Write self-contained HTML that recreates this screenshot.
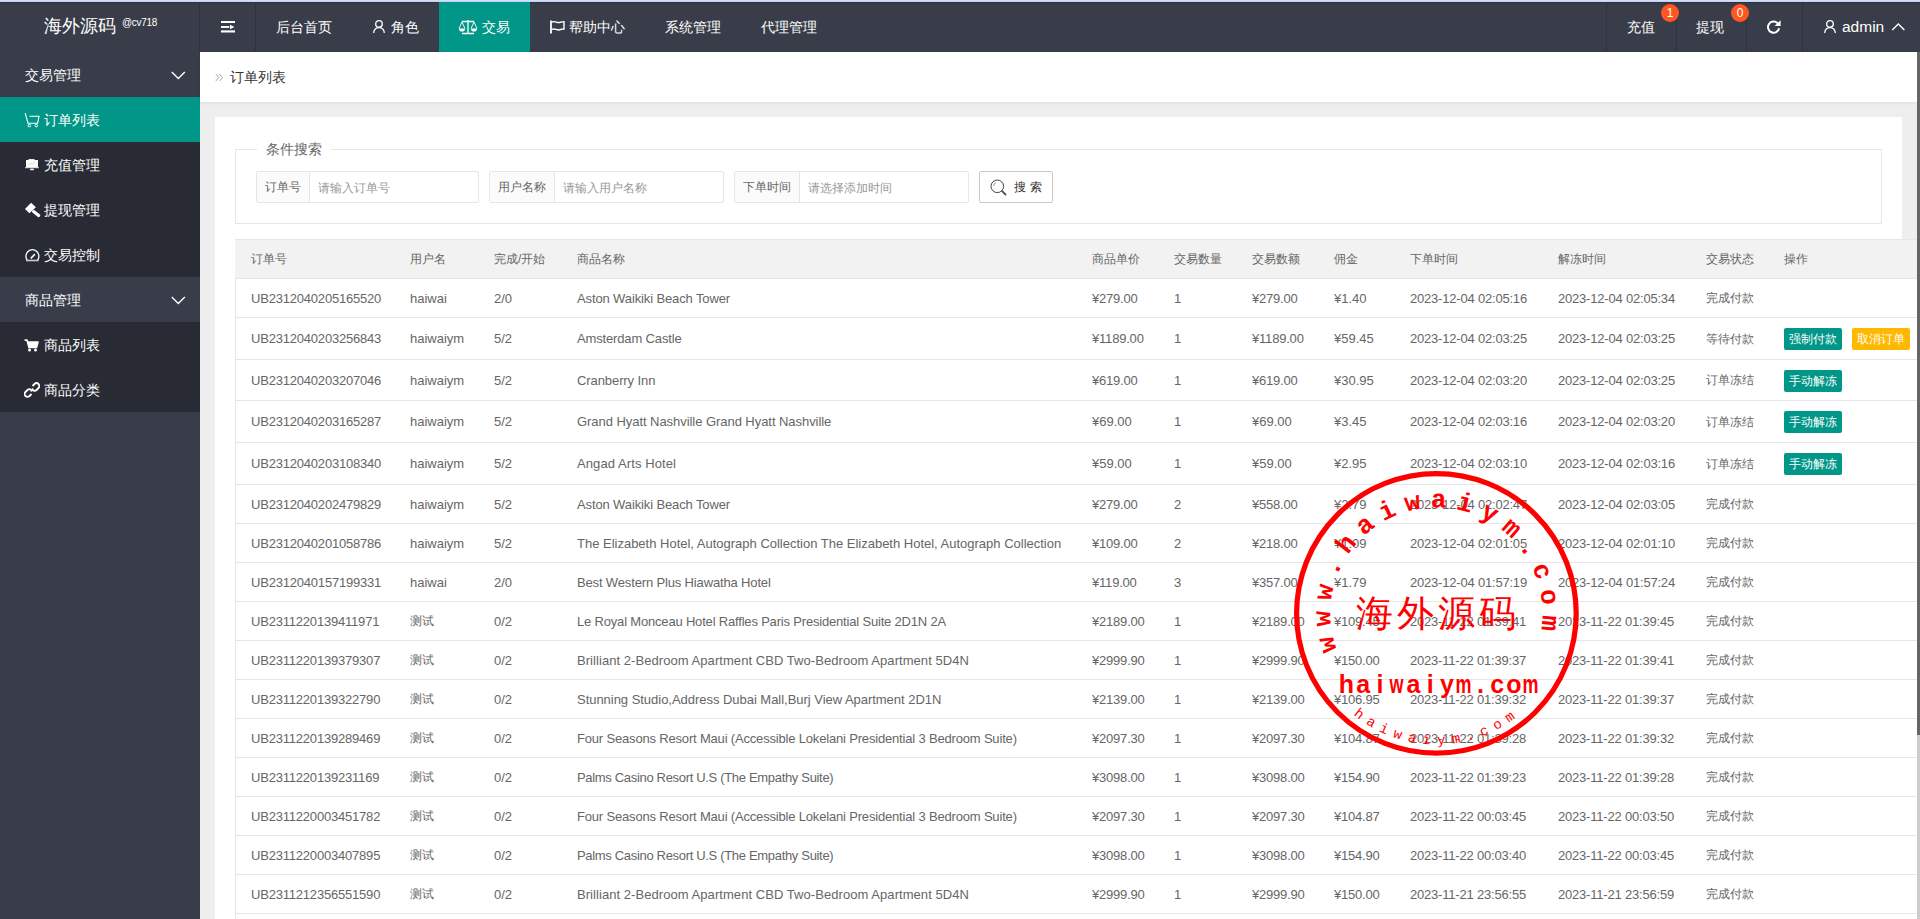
<!DOCTYPE html>
<html><head><meta charset="utf-8"><title>订单列表</title>
<style>
*{box-sizing:border-box;margin:0;padding:0}
html,body{width:1920px;height:919px;overflow:hidden;background:#eeeeee;font-family:"Liberation Sans",sans-serif;color:#666}
.abs{position:absolute}
#topline{position:absolute;left:0;top:0;width:1920px;height:2px;background:linear-gradient(#d3e2fb,#c4d0e8)}
#header{position:absolute;left:0;top:2px;width:1920px;height:50px;background:#393d49;border-top:1px solid #31333e}
.hsep{position:absolute;top:2px;width:1px;height:50px;background:#30333d}
.logo{position:absolute;left:44px;top:14px;color:#fff;font-size:18px;line-height:24px}
.logo sup{position:absolute;left:78px;top:3px;font-size:10px;line-height:12px;letter-spacing:-0.3px}
.nav{position:absolute;top:2px;height:50px;line-height:50px;font-weight:500;color:#fff;font-size:14px;white-space:nowrap}
.navact{position:absolute;left:439px;top:2px;width:91px;height:50px;background:#009688}
.badge{position:absolute;top:4px;width:18px;height:18px;border-radius:9px;background:#ff5722;color:#fff;font-size:12px;line-height:18px;text-align:center}
#side{position:absolute;left:0;top:52px;width:200px;height:867px;background:#393d49}
.sg{position:absolute;left:0;width:200px;height:45px;line-height:46px;font-weight:500;background:#393d49;color:#fff;font-size:14px;padding-left:25px}
.si{position:absolute;left:0;width:200px;height:45px;line-height:46px;font-weight:500;background:#282b33;color:#fff;font-size:14px;padding-left:44px}
.si.on{background:#009688}
.chev{position:absolute;left:172px;top:18px;width:10px;height:10px}
.sico{position:absolute;left:25px;top:16px;width:14px;height:14px}
#crumb{position:absolute;left:200px;top:52px;width:1717px;height:50px;background:#fff;box-shadow:0 1px 3px rgba(0,0,0,.08)}
#card{position:absolute;left:215px;top:117px;width:1687px;height:802px;background:#fff}
#fs{position:absolute;left:235px;top:149px;width:1647px;height:75px;border:1px solid #e6e6e6}
.legend{position:absolute;left:257px;top:140px;padding:0 9px;background:#fff;font-size:14px;line-height:18px;color:#666}
.ig{position:absolute;top:171px;height:32px;border:1px solid #e6e6e6;border-radius:2px;background:#fff}
.ig .lb{position:absolute;left:0;top:0;height:30px;line-height:30px;background:#fbfbfb;border-right:1px solid #e6e6e6;font-size:12px;color:#666;text-align:center}
.ig .ph{position:absolute;top:0;height:30px;line-height:32px;font-size:12px;color:#999}
.sbtn{position:absolute;left:979px;top:171px;width:74px;height:32px;border:1px solid #c9c9c9;border-radius:2px;background:#fff;font-size:12px;color:#333}
.thead{position:absolute;left:235px;width:1682px;background:#f2f2f2;border-top:1px solid #e6e6e6;border-bottom:1px solid #e6e6e6}
.tbody{position:absolute;left:235px;top:278px;width:1682px;height:641px;background:#fff;border-left:1px solid #e6e6e6}
.rowline{position:absolute;left:235px;width:1682px;height:1px;background:#e6e6e6}
.cell{position:absolute;white-space:nowrap;font-size:12px;color:#666}
.cell .en{font-size:13px}
.th{color:#666}
.btn{position:absolute;width:58px;height:22px;line-height:22px;border-radius:2px;color:#fff;font-size:12px;font-weight:500;text-align:center}
.btn.g{background:#009688}
.btn.w{background:#ffb800}
#sb{position:absolute;left:1917px;top:52px;width:3px;height:867px;background:#cdcdcd}
#sbt{position:absolute;left:1917px;top:52px;width:3px;height:683px;background:#666}
</style></head><body>
<div id="topline"></div>
<div id="header"></div>
<div class="hsep" style="left:199px"></div>
<div class="hsep" style="left:255px"></div>
<div class="hsep" style="left:1606px"></div>
<div class="hsep" style="left:1676px"></div>
<div class="hsep" style="left:1746px"></div>
<div class="hsep" style="left:1802px"></div>
<div class="logo">海外源码<sup>@cv718</sup></div>
<svg class="abs" style="left:221px;top:21px" width="16" height="13" viewBox="0 0 16 13"><rect x="0" y="0" width="14" height="2" fill="#fff"/><rect x="0" y="5" width="8.3" height="1.9" fill="#fff"/><path d="M9 3.7 L13.4 6 L9 8.2Z" fill="#fff"/><rect x="0" y="9.4" width="14" height="2.1" fill="#fff"/></svg>
<div class="navact"></div>
<div class="nav" style="left:276px">后台首页</div>
<div class="nav" style="left:391px">角色</div>
<div class="nav" style="left:482px">交易</div>
<div class="nav" style="left:569px">帮助中心</div>
<div class="nav" style="left:665px">系统管理</div>
<div class="nav" style="left:761px">代理管理</div>
<div class="nav" style="left:1627px">充值</div>
<div class="nav" style="left:1696px">提现</div>
<div class="badge" style="left:1661px">1</div>
<div class="badge" style="left:1731px">0</div>
<div class="nav" style="left:1842px;font-size:15.5px">admin</div>

<div id="side"></div>
<div class="sg" style="top:52px">交易管理</div>
<div class="si on" style="top:97px">订单列表</div>
<div class="si" style="top:142px">充值管理</div>
<div class="si" style="top:187px">提现管理</div>
<div class="si" style="top:232px">交易控制</div>
<div class="sg" style="top:277px">商品管理</div>
<div class="si" style="top:322px">商品列表</div>
<div class="si" style="top:367px">商品分类</div>


<svg class="abs" style="left:372px;top:19px" width="14" height="15" viewBox="0 0 14 15"><circle cx="7" cy="4.9" r="3.3" fill="none" stroke="#fff" stroke-width="1.3"/><path d="M1.7 14 C1.7 10.5 4 8.7 7 8.7 C10 8.7 12.3 10.5 12.3 14" fill="none" stroke="#fff" stroke-width="1.3"/></svg>
<svg class="abs" style="left:458px;top:19px" width="20" height="16" viewBox="0 0 20 16"><path d="M4 2.5 H16 M10 1 V14.5 M4 14.5 H16" stroke="#fff" stroke-width="1.3" fill="none"/><path d="M4 3 L1 9.5 M4 3 L7 9.5 M16 3 L13 9.5 M16 3 L19 9.5" stroke="#fff" stroke-width="0.9" fill="none"/><path d="M1 9.5 H7 C7 12 5.6 12.6 4 12.6 C2.4 12.6 1 12 1 9.5Z M13 9.5 H19 C19 12 17.6 12.6 16 12.6 C14.4 12.6 13 12 13 9.5Z" fill="#fff"/></svg>
<svg class="abs" style="left:549px;top:20px" width="17" height="14" viewBox="0 0 17 14"><path d="M2 0.5 V13.5" stroke="#fff" stroke-width="1.8"/><path d="M3 2 C6 0.5 8 3.5 10.5 2.5 C12 2 13 2 15 1.8 V9 C13 9.2 12 9.4 10.5 9.8 C8 10.8 6 7.8 3 9.3" fill="none" stroke="#fff" stroke-width="1.4"/></svg>
<svg class="abs" style="left:1766px;top:19px" width="16" height="15" viewBox="0 0 16 15"><path d="M11.6 4.2 A5.6 5.6 0 1 0 13.1 9.2" fill="none" stroke="#fff" stroke-width="2"/><path d="M8.6 6.9 L14.6 1.2 L14.6 6.9Z" fill="#fff"/></svg>
<svg class="abs" style="left:1823px;top:19px" width="14" height="15" viewBox="0 0 14 15"><circle cx="7" cy="4.9" r="3.3" fill="none" stroke="#fff" stroke-width="1.3"/><path d="M1.7 14 C1.7 10.5 4 8.7 7 8.7 C10 8.7 12.3 10.5 12.3 14" fill="none" stroke="#fff" stroke-width="1.3"/></svg>
<svg class="abs" style="left:1891px;top:22px" width="15" height="10" viewBox="0 0 15 10"><path d="M1.2 8 L7.3 2 L13.4 8" fill="none" stroke="#fff" stroke-width="1.4"/></svg>
<svg class="abs" style="left:171px;top:71px" width="15" height="9" viewBox="0 0 15 9"><path d="M0.8 1 L7.3 7.5 L13.8 1" fill="none" stroke="#fff" stroke-width="1.4"/></svg>
<svg class="abs" style="left:171px;top:296px" width="15" height="9" viewBox="0 0 15 9"><path d="M0.8 1 L7.3 7.5 L13.8 1" fill="none" stroke="#fff" stroke-width="1.4"/></svg>
<svg class="abs" style="left:24px;top:112px" width="16" height="16" viewBox="0 0 16 16"><path d="M1.2 1.2 L4 11.2 H13.6 L15 4.2 H5.5" fill="none" stroke="#fff" stroke-width="1.1"/><circle cx="5.3" cy="13.6" r="1.3" fill="none" stroke="#fff" stroke-width="1"/><circle cx="12.3" cy="13.6" r="1.3" fill="none" stroke="#fff" stroke-width="1"/></svg>
<svg class="abs" style="left:24px;top:158px" width="16" height="13" viewBox="0 0 16 13"><rect x="4.5" y="1" width="6" height="1.6" fill="#e8e8f0"/><rect x="2" y="2" width="12" height="7.8" fill="#fff"/><rect x="1" y="9.2" width="14" height="1" fill="#ddd"/><rect x="7.3" y="10.2" width="1.4" height="1" fill="#ccc"/><rect x="6" y="11" width="4" height="1.2" fill="#eee"/><path d="M4.5 6.5 L6.5 5.5 L8.5 5.8 L11 4" stroke="#e0c8c8" stroke-width="0.8" fill="none"/></svg>
<svg class="abs" style="left:24px;top:202px" width="17" height="16" viewBox="0 0 17 16"><path d="M7.1 0.8 L11.9 5.2 L5.4 11.3 L1 7.1Z" fill="#fff"/><path d="M9.6 9.6 L14.6 13.6" stroke="#fff" stroke-width="3.2" stroke-linecap="round"/></svg>
<svg class="abs" style="left:24px;top:248px" width="16" height="14" viewBox="0 0 16 14"><path d="M3.36 12.3 A6.5 6.5 0 1 1 13.44 12.3" fill="none" stroke="#fff" stroke-width="1.3"/><path d="M6.8 10.4 L10.9 6.1" stroke="#fff" stroke-width="1.6"/><rect x="2" y="11.7" width="12.6" height="1.6" fill="#c8c8c8"/></svg>
<svg class="abs" style="left:24px;top:339px" width="15" height="13" viewBox="0 0 15 13"><path d="M0.5 1 H3 L5 8.5 H12.5 L14 3 H4" fill="#fff" stroke="#fff" stroke-width="1.6" stroke-linejoin="round"/><circle cx="5.5" cy="11" r="1.5" fill="#fff"/><circle cx="11.5" cy="11" r="1.5" fill="#fff"/></svg>
<svg class="abs" style="left:24px;top:382px" width="16" height="16" viewBox="0 0 16 16"><path d="M6.6 9.4 L9.4 6.6" stroke="#fff" stroke-width="1.6"/><path d="M8.5 4 L10.5 2 C11.6 0.9 13.4 0.9 14.5 2 C15.6 3.1 15.6 4.9 14.5 6 L12.5 8 C11.4 9.1 9.6 9.1 8.5 8" fill="none" stroke="#fff" stroke-width="1.8"/><path d="M7.5 12 L5.5 14 C4.4 15.1 2.6 15.1 1.5 14 C0.4 12.9 0.4 11.1 1.5 10 L3.5 8 C4.6 6.9 6.4 6.9 7.5 8" fill="none" stroke="#fff" stroke-width="1.8"/></svg>
<div id="crumb"><span class="abs" style="left:30px;top:16px;font-size:14px;line-height:18px;color:#333">订单列表</span></div>
<svg class="abs" style="left:214px;top:72px" width="10" height="11" viewBox="0 0 10 11"><path d="M1.8 2 L4.8 5.5 L1.8 9 M5.5 2 L8.5 5.5 L5.5 9" fill="none" stroke="#aaa" stroke-width="1"/></svg>
<div id="card"></div>
<div id="fs"></div>
<div class="legend">条件搜索</div>
<div class="ig" style="left:256px;width:223px"><div class="lb" style="width:53px">订单号</div><div class="ph" style="left:61px">请输入订单号</div></div>
<div class="ig" style="left:489px;width:235px"><div class="lb" style="width:65px">用户名称</div><div class="ph" style="left:73px">请输入用户名称</div></div>
<div class="ig" style="left:734px;width:235px"><div class="lb" style="width:65px">下单时间</div><div class="ph" style="left:73px">请选择添加时间</div></div>
<div class="sbtn"><span class="abs" style="left:34px;top:7px;font-size:12px;line-height:16px;letter-spacing:4px">搜索</span></div>

<svg class="abs" style="left:989px;top:178px" width="19" height="18" viewBox="0 0 19 18"><circle cx="8.3" cy="8.3" r="6.3" fill="none" stroke="#444" stroke-width="1"/><path d="M13.2 13.2 L16.6 16.6" stroke="#444" stroke-width="1.7" stroke-linecap="round"/><path d="M4.8 8 C4.8 6.5 5.4 5.4 6.6 4.9" fill="none" stroke="#666" stroke-width="0.7"/></svg>
<div class="tbody"></div>
<div class="thead" style="top:239px;height:40px"></div>
<div class="cell th" style="left:251px;top:240px;height:38px;line-height:38px">订单号</div>
<div class="cell th" style="left:410px;top:240px;height:38px;line-height:38px">用户名</div>
<div class="cell th" style="left:494px;top:240px;height:38px;line-height:38px">完成/开始</div>
<div class="cell th" style="left:577px;top:240px;height:38px;line-height:38px">商品名称</div>
<div class="cell th" style="left:1092px;top:240px;height:38px;line-height:38px">商品单价</div>
<div class="cell th" style="left:1174px;top:240px;height:38px;line-height:38px">交易数量</div>
<div class="cell th" style="left:1252px;top:240px;height:38px;line-height:38px">交易数额</div>
<div class="cell th" style="left:1334px;top:240px;height:38px;line-height:38px">佣金</div>
<div class="cell th" style="left:1410px;top:240px;height:38px;line-height:38px">下单时间</div>
<div class="cell th" style="left:1558px;top:240px;height:38px;line-height:38px">解冻时间</div>
<div class="cell th" style="left:1706px;top:240px;height:38px;line-height:38px">交易状态</div>
<div class="cell th" style="left:1784px;top:240px;height:38px;line-height:38px">操作</div>
<div class="rowline" style="top:317px"></div>
<div class="cell" style="left:251px;top:279px;height:39px;line-height:39px;letter-spacing:-0.2px;"><span class="en">UB2312040205165520</span></div>
<div class="cell" style="left:410px;top:279px;height:39px;line-height:39px;"><span class="en">haiwai</span></div>
<div class="cell" style="left:494px;top:279px;height:39px;line-height:39px;"><span class="en">2/0</span></div>
<div class="cell" style="left:577px;top:279px;height:39px;line-height:39px;letter-spacing:-0.124px;"><span class="en">Aston Waikiki Beach Tower</span></div>
<div class="cell" style="left:1092px;top:279px;height:39px;line-height:39px;letter-spacing:-0.2px;"><span class="en">¥279.00</span></div>
<div class="cell" style="left:1174px;top:279px;height:39px;line-height:39px;"><span class="en">1</span></div>
<div class="cell" style="left:1252px;top:279px;height:39px;line-height:39px;letter-spacing:-0.2px;"><span class="en">¥279.00</span></div>
<div class="cell" style="left:1334px;top:279px;height:39px;line-height:39px;"><span class="en">¥1.40</span></div>
<div class="cell" style="left:1410px;top:279px;height:39px;line-height:39px;letter-spacing:-0.2px;"><span class="en">2023-12-04 02:05:16</span></div>
<div class="cell" style="left:1558px;top:279px;height:39px;line-height:39px;letter-spacing:-0.2px;"><span class="en">2023-12-04 02:05:34</span></div>
<div class="cell" style="left:1706px;top:279px;height:39px;line-height:39px;"><span class="zh">完成付款</span></div>
<div class="rowline" style="top:359px"></div>
<div class="cell" style="left:251px;top:318px;height:42px;line-height:42px;letter-spacing:-0.2px;"><span class="en">UB2312040203256843</span></div>
<div class="cell" style="left:410px;top:318px;height:42px;line-height:42px;"><span class="en">haiwaiym</span></div>
<div class="cell" style="left:494px;top:318px;height:42px;line-height:42px;"><span class="en">5/2</span></div>
<div class="cell" style="left:577px;top:318px;height:42px;line-height:42px;letter-spacing:-0.150px;"><span class="en">Amsterdam Castle</span></div>
<div class="cell" style="left:1092px;top:318px;height:42px;line-height:42px;letter-spacing:-0.2px;"><span class="en">¥1189.00</span></div>
<div class="cell" style="left:1174px;top:318px;height:42px;line-height:42px;"><span class="en">1</span></div>
<div class="cell" style="left:1252px;top:318px;height:42px;line-height:42px;letter-spacing:-0.2px;"><span class="en">¥1189.00</span></div>
<div class="cell" style="left:1334px;top:318px;height:42px;line-height:42px;"><span class="en">¥59.45</span></div>
<div class="cell" style="left:1410px;top:318px;height:42px;line-height:42px;letter-spacing:-0.2px;"><span class="en">2023-12-04 02:03:25</span></div>
<div class="cell" style="left:1558px;top:318px;height:42px;line-height:42px;letter-spacing:-0.2px;"><span class="en">2023-12-04 02:03:25</span></div>
<div class="cell" style="left:1706px;top:318px;height:42px;line-height:42px;"><span class="zh">等待付款</span></div>
<div class="btn g" style="left:1784px;top:328px">强制付款</div>
<div class="btn w" style="left:1852px;top:328px">取消订单</div>
<div class="rowline" style="top:400px"></div>
<div class="cell" style="left:251px;top:360px;height:41px;line-height:41px;letter-spacing:-0.2px;"><span class="en">UB2312040203207046</span></div>
<div class="cell" style="left:410px;top:360px;height:41px;line-height:41px;"><span class="en">haiwaiym</span></div>
<div class="cell" style="left:494px;top:360px;height:41px;line-height:41px;"><span class="en">5/2</span></div>
<div class="cell" style="left:577px;top:360px;height:41px;line-height:41px;letter-spacing:-0.085px;"><span class="en">Cranberry Inn</span></div>
<div class="cell" style="left:1092px;top:360px;height:41px;line-height:41px;letter-spacing:-0.2px;"><span class="en">¥619.00</span></div>
<div class="cell" style="left:1174px;top:360px;height:41px;line-height:41px;"><span class="en">1</span></div>
<div class="cell" style="left:1252px;top:360px;height:41px;line-height:41px;letter-spacing:-0.2px;"><span class="en">¥619.00</span></div>
<div class="cell" style="left:1334px;top:360px;height:41px;line-height:41px;"><span class="en">¥30.95</span></div>
<div class="cell" style="left:1410px;top:360px;height:41px;line-height:41px;letter-spacing:-0.2px;"><span class="en">2023-12-04 02:03:20</span></div>
<div class="cell" style="left:1558px;top:360px;height:41px;line-height:41px;letter-spacing:-0.2px;"><span class="en">2023-12-04 02:03:25</span></div>
<div class="cell" style="left:1706px;top:360px;height:41px;line-height:41px;"><span class="zh">订单冻结</span></div>
<div class="btn g" style="left:1784px;top:370px">手动解冻</div>
<div class="rowline" style="top:442px"></div>
<div class="cell" style="left:251px;top:401px;height:42px;line-height:42px;letter-spacing:-0.2px;"><span class="en">UB2312040203165287</span></div>
<div class="cell" style="left:410px;top:401px;height:42px;line-height:42px;"><span class="en">haiwaiym</span></div>
<div class="cell" style="left:494px;top:401px;height:42px;line-height:42px;"><span class="en">5/2</span></div>
<div class="cell" style="left:577px;top:401px;height:42px;line-height:42px;letter-spacing:-0.051px;"><span class="en">Grand Hyatt Nashville Grand Hyatt Nashville</span></div>
<div class="cell" style="left:1092px;top:401px;height:42px;line-height:42px;"><span class="en">¥69.00</span></div>
<div class="cell" style="left:1174px;top:401px;height:42px;line-height:42px;"><span class="en">1</span></div>
<div class="cell" style="left:1252px;top:401px;height:42px;line-height:42px;"><span class="en">¥69.00</span></div>
<div class="cell" style="left:1334px;top:401px;height:42px;line-height:42px;"><span class="en">¥3.45</span></div>
<div class="cell" style="left:1410px;top:401px;height:42px;line-height:42px;letter-spacing:-0.2px;"><span class="en">2023-12-04 02:03:16</span></div>
<div class="cell" style="left:1558px;top:401px;height:42px;line-height:42px;letter-spacing:-0.2px;"><span class="en">2023-12-04 02:03:20</span></div>
<div class="cell" style="left:1706px;top:401px;height:42px;line-height:42px;"><span class="zh">订单冻结</span></div>
<div class="btn g" style="left:1784px;top:411px">手动解冻</div>
<div class="rowline" style="top:484px"></div>
<div class="cell" style="left:251px;top:443px;height:42px;line-height:42px;letter-spacing:-0.2px;"><span class="en">UB2312040203108340</span></div>
<div class="cell" style="left:410px;top:443px;height:42px;line-height:42px;"><span class="en">haiwaiym</span></div>
<div class="cell" style="left:494px;top:443px;height:42px;line-height:42px;"><span class="en">5/2</span></div>
<div class="cell" style="left:577px;top:443px;height:42px;line-height:42px;letter-spacing:0.094px;"><span class="en">Angad Arts Hotel</span></div>
<div class="cell" style="left:1092px;top:443px;height:42px;line-height:42px;"><span class="en">¥59.00</span></div>
<div class="cell" style="left:1174px;top:443px;height:42px;line-height:42px;"><span class="en">1</span></div>
<div class="cell" style="left:1252px;top:443px;height:42px;line-height:42px;"><span class="en">¥59.00</span></div>
<div class="cell" style="left:1334px;top:443px;height:42px;line-height:42px;"><span class="en">¥2.95</span></div>
<div class="cell" style="left:1410px;top:443px;height:42px;line-height:42px;letter-spacing:-0.2px;"><span class="en">2023-12-04 02:03:10</span></div>
<div class="cell" style="left:1558px;top:443px;height:42px;line-height:42px;letter-spacing:-0.2px;"><span class="en">2023-12-04 02:03:16</span></div>
<div class="cell" style="left:1706px;top:443px;height:42px;line-height:42px;"><span class="zh">订单冻结</span></div>
<div class="btn g" style="left:1784px;top:453px">手动解冻</div>
<div class="rowline" style="top:523px"></div>
<div class="cell" style="left:251px;top:485px;height:39px;line-height:39px;letter-spacing:-0.2px;"><span class="en">UB2312040202479829</span></div>
<div class="cell" style="left:410px;top:485px;height:39px;line-height:39px;"><span class="en">haiwaiym</span></div>
<div class="cell" style="left:494px;top:485px;height:39px;line-height:39px;"><span class="en">5/2</span></div>
<div class="cell" style="left:577px;top:485px;height:39px;line-height:39px;letter-spacing:-0.124px;"><span class="en">Aston Waikiki Beach Tower</span></div>
<div class="cell" style="left:1092px;top:485px;height:39px;line-height:39px;letter-spacing:-0.2px;"><span class="en">¥279.00</span></div>
<div class="cell" style="left:1174px;top:485px;height:39px;line-height:39px;"><span class="en">2</span></div>
<div class="cell" style="left:1252px;top:485px;height:39px;line-height:39px;letter-spacing:-0.2px;"><span class="en">¥558.00</span></div>
<div class="cell" style="left:1334px;top:485px;height:39px;line-height:39px;"><span class="en">¥2.79</span></div>
<div class="cell" style="left:1410px;top:485px;height:39px;line-height:39px;letter-spacing:-0.2px;"><span class="en">2023-12-04 02:02:47</span></div>
<div class="cell" style="left:1558px;top:485px;height:39px;line-height:39px;letter-spacing:-0.2px;"><span class="en">2023-12-04 02:03:05</span></div>
<div class="cell" style="left:1706px;top:485px;height:39px;line-height:39px;"><span class="zh">完成付款</span></div>
<div class="rowline" style="top:562px"></div>
<div class="cell" style="left:251px;top:524px;height:39px;line-height:39px;letter-spacing:-0.2px;"><span class="en">UB2312040201058786</span></div>
<div class="cell" style="left:410px;top:524px;height:39px;line-height:39px;"><span class="en">haiwaiym</span></div>
<div class="cell" style="left:494px;top:524px;height:39px;line-height:39px;"><span class="en">5/2</span></div>
<div class="cell" style="left:577px;top:524px;height:39px;line-height:39px;letter-spacing:-0.006px;"><span class="en">The Elizabeth Hotel, Autograph Collection The Elizabeth Hotel, Autograph Collection</span></div>
<div class="cell" style="left:1092px;top:524px;height:39px;line-height:39px;letter-spacing:-0.2px;"><span class="en">¥109.00</span></div>
<div class="cell" style="left:1174px;top:524px;height:39px;line-height:39px;"><span class="en">2</span></div>
<div class="cell" style="left:1252px;top:524px;height:39px;line-height:39px;letter-spacing:-0.2px;"><span class="en">¥218.00</span></div>
<div class="cell" style="left:1334px;top:524px;height:39px;line-height:39px;"><span class="en">¥1.09</span></div>
<div class="cell" style="left:1410px;top:524px;height:39px;line-height:39px;letter-spacing:-0.2px;"><span class="en">2023-12-04 02:01:05</span></div>
<div class="cell" style="left:1558px;top:524px;height:39px;line-height:39px;letter-spacing:-0.2px;"><span class="en">2023-12-04 02:01:10</span></div>
<div class="cell" style="left:1706px;top:524px;height:39px;line-height:39px;"><span class="zh">完成付款</span></div>
<div class="rowline" style="top:601px"></div>
<div class="cell" style="left:251px;top:563px;height:39px;line-height:39px;letter-spacing:-0.2px;"><span class="en">UB2312040157199331</span></div>
<div class="cell" style="left:410px;top:563px;height:39px;line-height:39px;"><span class="en">haiwai</span></div>
<div class="cell" style="left:494px;top:563px;height:39px;line-height:39px;"><span class="en">2/0</span></div>
<div class="cell" style="left:577px;top:563px;height:39px;line-height:39px;letter-spacing:-0.150px;"><span class="en">Best Western Plus Hiawatha Hotel</span></div>
<div class="cell" style="left:1092px;top:563px;height:39px;line-height:39px;letter-spacing:-0.2px;"><span class="en">¥119.00</span></div>
<div class="cell" style="left:1174px;top:563px;height:39px;line-height:39px;"><span class="en">3</span></div>
<div class="cell" style="left:1252px;top:563px;height:39px;line-height:39px;letter-spacing:-0.2px;"><span class="en">¥357.00</span></div>
<div class="cell" style="left:1334px;top:563px;height:39px;line-height:39px;"><span class="en">¥1.79</span></div>
<div class="cell" style="left:1410px;top:563px;height:39px;line-height:39px;letter-spacing:-0.2px;"><span class="en">2023-12-04 01:57:19</span></div>
<div class="cell" style="left:1558px;top:563px;height:39px;line-height:39px;letter-spacing:-0.2px;"><span class="en">2023-12-04 01:57:24</span></div>
<div class="cell" style="left:1706px;top:563px;height:39px;line-height:39px;"><span class="zh">完成付款</span></div>
<div class="rowline" style="top:640px"></div>
<div class="cell" style="left:251px;top:602px;height:39px;line-height:39px;letter-spacing:-0.2px;"><span class="en">UB2311220139411971</span></div>
<div class="cell" style="left:410px;top:602px;height:39px;line-height:39px;"><span class="zh">测试</span></div>
<div class="cell" style="left:494px;top:602px;height:39px;line-height:39px;"><span class="en">0/2</span></div>
<div class="cell" style="left:577px;top:602px;height:39px;line-height:39px;letter-spacing:-0.183px;"><span class="en">Le Royal Monceau Hotel Raffles Paris Presidential Suite 2D1N 2A</span></div>
<div class="cell" style="left:1092px;top:602px;height:39px;line-height:39px;letter-spacing:-0.2px;"><span class="en">¥2189.00</span></div>
<div class="cell" style="left:1174px;top:602px;height:39px;line-height:39px;"><span class="en">1</span></div>
<div class="cell" style="left:1252px;top:602px;height:39px;line-height:39px;letter-spacing:-0.2px;"><span class="en">¥2189.00</span></div>
<div class="cell" style="left:1334px;top:602px;height:39px;line-height:39px;letter-spacing:-0.2px;"><span class="en">¥109.45</span></div>
<div class="cell" style="left:1410px;top:602px;height:39px;line-height:39px;letter-spacing:-0.2px;"><span class="en">2023-11-22 01:39:41</span></div>
<div class="cell" style="left:1558px;top:602px;height:39px;line-height:39px;letter-spacing:-0.2px;"><span class="en">2023-11-22 01:39:45</span></div>
<div class="cell" style="left:1706px;top:602px;height:39px;line-height:39px;"><span class="zh">完成付款</span></div>
<div class="rowline" style="top:679px"></div>
<div class="cell" style="left:251px;top:641px;height:39px;line-height:39px;letter-spacing:-0.2px;"><span class="en">UB2311220139379307</span></div>
<div class="cell" style="left:410px;top:641px;height:39px;line-height:39px;"><span class="zh">测试</span></div>
<div class="cell" style="left:494px;top:641px;height:39px;line-height:39px;"><span class="en">0/2</span></div>
<div class="cell" style="left:577px;top:641px;height:39px;line-height:39px;letter-spacing:0.058px;"><span class="en">Brilliant 2-Bedroom Apartment CBD Two-Bedroom Apartment 5D4N</span></div>
<div class="cell" style="left:1092px;top:641px;height:39px;line-height:39px;letter-spacing:-0.2px;"><span class="en">¥2999.90</span></div>
<div class="cell" style="left:1174px;top:641px;height:39px;line-height:39px;"><span class="en">1</span></div>
<div class="cell" style="left:1252px;top:641px;height:39px;line-height:39px;letter-spacing:-0.2px;"><span class="en">¥2999.90</span></div>
<div class="cell" style="left:1334px;top:641px;height:39px;line-height:39px;letter-spacing:-0.2px;"><span class="en">¥150.00</span></div>
<div class="cell" style="left:1410px;top:641px;height:39px;line-height:39px;letter-spacing:-0.2px;"><span class="en">2023-11-22 01:39:37</span></div>
<div class="cell" style="left:1558px;top:641px;height:39px;line-height:39px;letter-spacing:-0.2px;"><span class="en">2023-11-22 01:39:41</span></div>
<div class="cell" style="left:1706px;top:641px;height:39px;line-height:39px;"><span class="zh">完成付款</span></div>
<div class="rowline" style="top:718px"></div>
<div class="cell" style="left:251px;top:680px;height:39px;line-height:39px;letter-spacing:-0.2px;"><span class="en">UB2311220139322790</span></div>
<div class="cell" style="left:410px;top:680px;height:39px;line-height:39px;"><span class="zh">测试</span></div>
<div class="cell" style="left:494px;top:680px;height:39px;line-height:39px;"><span class="en">0/2</span></div>
<div class="cell" style="left:577px;top:680px;height:39px;line-height:39px;letter-spacing:-0.031px;"><span class="en">Stunning Studio,Address Dubai Mall,Burj View Apartment 2D1N</span></div>
<div class="cell" style="left:1092px;top:680px;height:39px;line-height:39px;letter-spacing:-0.2px;"><span class="en">¥2139.00</span></div>
<div class="cell" style="left:1174px;top:680px;height:39px;line-height:39px;"><span class="en">1</span></div>
<div class="cell" style="left:1252px;top:680px;height:39px;line-height:39px;letter-spacing:-0.2px;"><span class="en">¥2139.00</span></div>
<div class="cell" style="left:1334px;top:680px;height:39px;line-height:39px;letter-spacing:-0.2px;"><span class="en">¥106.95</span></div>
<div class="cell" style="left:1410px;top:680px;height:39px;line-height:39px;letter-spacing:-0.2px;"><span class="en">2023-11-22 01:39:32</span></div>
<div class="cell" style="left:1558px;top:680px;height:39px;line-height:39px;letter-spacing:-0.2px;"><span class="en">2023-11-22 01:39:37</span></div>
<div class="cell" style="left:1706px;top:680px;height:39px;line-height:39px;"><span class="zh">完成付款</span></div>
<div class="rowline" style="top:757px"></div>
<div class="cell" style="left:251px;top:719px;height:39px;line-height:39px;letter-spacing:-0.2px;"><span class="en">UB2311220139289469</span></div>
<div class="cell" style="left:410px;top:719px;height:39px;line-height:39px;"><span class="zh">测试</span></div>
<div class="cell" style="left:494px;top:719px;height:39px;line-height:39px;"><span class="en">0/2</span></div>
<div class="cell" style="left:577px;top:719px;height:39px;line-height:39px;letter-spacing:-0.177px;"><span class="en">Four Seasons Resort Maui (Accessible Lokelani Presidential 3 Bedroom Suite)</span></div>
<div class="cell" style="left:1092px;top:719px;height:39px;line-height:39px;letter-spacing:-0.2px;"><span class="en">¥2097.30</span></div>
<div class="cell" style="left:1174px;top:719px;height:39px;line-height:39px;"><span class="en">1</span></div>
<div class="cell" style="left:1252px;top:719px;height:39px;line-height:39px;letter-spacing:-0.2px;"><span class="en">¥2097.30</span></div>
<div class="cell" style="left:1334px;top:719px;height:39px;line-height:39px;letter-spacing:-0.2px;"><span class="en">¥104.87</span></div>
<div class="cell" style="left:1410px;top:719px;height:39px;line-height:39px;letter-spacing:-0.2px;"><span class="en">2023-11-22 01:39:28</span></div>
<div class="cell" style="left:1558px;top:719px;height:39px;line-height:39px;letter-spacing:-0.2px;"><span class="en">2023-11-22 01:39:32</span></div>
<div class="cell" style="left:1706px;top:719px;height:39px;line-height:39px;"><span class="zh">完成付款</span></div>
<div class="rowline" style="top:796px"></div>
<div class="cell" style="left:251px;top:758px;height:39px;line-height:39px;letter-spacing:-0.2px;"><span class="en">UB2311220139231169</span></div>
<div class="cell" style="left:410px;top:758px;height:39px;line-height:39px;"><span class="zh">测试</span></div>
<div class="cell" style="left:494px;top:758px;height:39px;line-height:39px;"><span class="en">0/2</span></div>
<div class="cell" style="left:577px;top:758px;height:39px;line-height:39px;letter-spacing:-0.323px;"><span class="en">Palms Casino Resort U.S (The Empathy Suite)</span></div>
<div class="cell" style="left:1092px;top:758px;height:39px;line-height:39px;letter-spacing:-0.2px;"><span class="en">¥3098.00</span></div>
<div class="cell" style="left:1174px;top:758px;height:39px;line-height:39px;"><span class="en">1</span></div>
<div class="cell" style="left:1252px;top:758px;height:39px;line-height:39px;letter-spacing:-0.2px;"><span class="en">¥3098.00</span></div>
<div class="cell" style="left:1334px;top:758px;height:39px;line-height:39px;letter-spacing:-0.2px;"><span class="en">¥154.90</span></div>
<div class="cell" style="left:1410px;top:758px;height:39px;line-height:39px;letter-spacing:-0.2px;"><span class="en">2023-11-22 01:39:23</span></div>
<div class="cell" style="left:1558px;top:758px;height:39px;line-height:39px;letter-spacing:-0.2px;"><span class="en">2023-11-22 01:39:28</span></div>
<div class="cell" style="left:1706px;top:758px;height:39px;line-height:39px;"><span class="zh">完成付款</span></div>
<div class="rowline" style="top:835px"></div>
<div class="cell" style="left:251px;top:797px;height:39px;line-height:39px;letter-spacing:-0.2px;"><span class="en">UB2311220003451782</span></div>
<div class="cell" style="left:410px;top:797px;height:39px;line-height:39px;"><span class="zh">测试</span></div>
<div class="cell" style="left:494px;top:797px;height:39px;line-height:39px;"><span class="en">0/2</span></div>
<div class="cell" style="left:577px;top:797px;height:39px;line-height:39px;letter-spacing:-0.177px;"><span class="en">Four Seasons Resort Maui (Accessible Lokelani Presidential 3 Bedroom Suite)</span></div>
<div class="cell" style="left:1092px;top:797px;height:39px;line-height:39px;letter-spacing:-0.2px;"><span class="en">¥2097.30</span></div>
<div class="cell" style="left:1174px;top:797px;height:39px;line-height:39px;"><span class="en">1</span></div>
<div class="cell" style="left:1252px;top:797px;height:39px;line-height:39px;letter-spacing:-0.2px;"><span class="en">¥2097.30</span></div>
<div class="cell" style="left:1334px;top:797px;height:39px;line-height:39px;letter-spacing:-0.2px;"><span class="en">¥104.87</span></div>
<div class="cell" style="left:1410px;top:797px;height:39px;line-height:39px;letter-spacing:-0.2px;"><span class="en">2023-11-22 00:03:45</span></div>
<div class="cell" style="left:1558px;top:797px;height:39px;line-height:39px;letter-spacing:-0.2px;"><span class="en">2023-11-22 00:03:50</span></div>
<div class="cell" style="left:1706px;top:797px;height:39px;line-height:39px;"><span class="zh">完成付款</span></div>
<div class="rowline" style="top:874px"></div>
<div class="cell" style="left:251px;top:836px;height:39px;line-height:39px;letter-spacing:-0.2px;"><span class="en">UB2311220003407895</span></div>
<div class="cell" style="left:410px;top:836px;height:39px;line-height:39px;"><span class="zh">测试</span></div>
<div class="cell" style="left:494px;top:836px;height:39px;line-height:39px;"><span class="en">0/2</span></div>
<div class="cell" style="left:577px;top:836px;height:39px;line-height:39px;letter-spacing:-0.323px;"><span class="en">Palms Casino Resort U.S (The Empathy Suite)</span></div>
<div class="cell" style="left:1092px;top:836px;height:39px;line-height:39px;letter-spacing:-0.2px;"><span class="en">¥3098.00</span></div>
<div class="cell" style="left:1174px;top:836px;height:39px;line-height:39px;"><span class="en">1</span></div>
<div class="cell" style="left:1252px;top:836px;height:39px;line-height:39px;letter-spacing:-0.2px;"><span class="en">¥3098.00</span></div>
<div class="cell" style="left:1334px;top:836px;height:39px;line-height:39px;letter-spacing:-0.2px;"><span class="en">¥154.90</span></div>
<div class="cell" style="left:1410px;top:836px;height:39px;line-height:39px;letter-spacing:-0.2px;"><span class="en">2023-11-22 00:03:40</span></div>
<div class="cell" style="left:1558px;top:836px;height:39px;line-height:39px;letter-spacing:-0.2px;"><span class="en">2023-11-22 00:03:45</span></div>
<div class="cell" style="left:1706px;top:836px;height:39px;line-height:39px;"><span class="zh">完成付款</span></div>
<div class="rowline" style="top:913px"></div>
<div class="cell" style="left:251px;top:875px;height:39px;line-height:39px;letter-spacing:-0.2px;"><span class="en">UB2311212356551590</span></div>
<div class="cell" style="left:410px;top:875px;height:39px;line-height:39px;"><span class="zh">测试</span></div>
<div class="cell" style="left:494px;top:875px;height:39px;line-height:39px;"><span class="en">0/2</span></div>
<div class="cell" style="left:577px;top:875px;height:39px;line-height:39px;letter-spacing:0.058px;"><span class="en">Brilliant 2-Bedroom Apartment CBD Two-Bedroom Apartment 5D4N</span></div>
<div class="cell" style="left:1092px;top:875px;height:39px;line-height:39px;letter-spacing:-0.2px;"><span class="en">¥2999.90</span></div>
<div class="cell" style="left:1174px;top:875px;height:39px;line-height:39px;"><span class="en">1</span></div>
<div class="cell" style="left:1252px;top:875px;height:39px;line-height:39px;letter-spacing:-0.2px;"><span class="en">¥2999.90</span></div>
<div class="cell" style="left:1334px;top:875px;height:39px;line-height:39px;letter-spacing:-0.2px;"><span class="en">¥150.00</span></div>
<div class="cell" style="left:1410px;top:875px;height:39px;line-height:39px;letter-spacing:-0.2px;"><span class="en">2023-11-21 23:56:55</span></div>
<div class="cell" style="left:1558px;top:875px;height:39px;line-height:39px;letter-spacing:-0.2px;"><span class="en">2023-11-21 23:56:59</span></div>
<div class="cell" style="left:1706px;top:875px;height:39px;line-height:39px;"><span class="zh">完成付款</span></div>
<div class="rowline" style="top:952px"></div>
<div class="cell" style="left:251px;top:914px;height:39px;line-height:39px;letter-spacing:-0.2px;"><span class="en">UB2311212356500000</span></div>
<div class="cell" style="left:410px;top:914px;height:39px;line-height:39px;"><span class="zh">测试</span></div>
<div class="cell" style="left:494px;top:914px;height:39px;line-height:39px;"><span class="en">0/2</span></div>
<div class="cell" style="left:577px;top:914px;height:39px;line-height:39px;letter-spacing:-0.323px;"><span class="en">Palms Casino Resort U.S (The Empathy Suite)</span></div>
<div class="cell" style="left:1092px;top:914px;height:39px;line-height:39px;letter-spacing:-0.2px;"><span class="en">¥3098.00</span></div>
<div class="cell" style="left:1174px;top:914px;height:39px;line-height:39px;"><span class="en">1</span></div>
<div class="cell" style="left:1252px;top:914px;height:39px;line-height:39px;letter-spacing:-0.2px;"><span class="en">¥3098.00</span></div>
<div class="cell" style="left:1334px;top:914px;height:39px;line-height:39px;letter-spacing:-0.2px;"><span class="en">¥154.90</span></div>
<div class="cell" style="left:1410px;top:914px;height:39px;line-height:39px;letter-spacing:-0.2px;"><span class="en">2023-11-21 23:56:50</span></div>
<div class="cell" style="left:1558px;top:914px;height:39px;line-height:39px;letter-spacing:-0.2px;"><span class="en">2023-11-21 23:56:55</span></div>
<div class="cell" style="left:1706px;top:914px;height:39px;line-height:39px;"><span class="zh">完成付款</span></div>
<svg class="abs" style="left:1286px;top:462px;pointer-events:none" width="302" height="302" viewBox="0 0 302 302">
<circle cx="150.4000000000001" cy="151.39999999999998" r="139.8" fill="none" stroke="#ff0000" stroke-width="5.2"/>
<text x="0" y="0" transform="translate(48.5,180.6) rotate(254.0)" text-anchor="middle" font-family="Liberation Mono" font-weight="bold" font-size="26" fill="#ff0000">w</text>
<text x="0" y="0" transform="translate(44.5,156.2) rotate(267.4)" text-anchor="middle" font-family="Liberation Mono" font-weight="bold" font-size="26" fill="#ff0000">w</text>
<text x="0" y="0" transform="translate(46.3,131.5) rotate(280.8)" text-anchor="middle" font-family="Liberation Mono" font-weight="bold" font-size="26" fill="#ff0000">w</text>
<text x="0" y="0" transform="translate(53.7,107.9) rotate(294.2)" text-anchor="middle" font-family="Liberation Mono" font-weight="bold" font-size="26" fill="#ff0000">.</text>
<text x="0" y="0" transform="translate(66.4,86.7) rotate(307.6)" text-anchor="middle" font-family="Liberation Mono" font-weight="bold" font-size="26" fill="#ff0000">h</text>
<text x="0" y="0" transform="translate(83.7,69.0) rotate(321.0)" text-anchor="middle" font-family="Liberation Mono" font-weight="bold" font-size="26" fill="#ff0000">a</text>
<text x="0" y="0" transform="translate(104.6,55.8) rotate(334.4)" text-anchor="middle" font-family="Liberation Mono" font-weight="bold" font-size="26" fill="#ff0000">i</text>
<text x="0" y="0" transform="translate(128.0,47.8) rotate(347.8)" text-anchor="middle" font-family="Liberation Mono" font-weight="bold" font-size="26" fill="#ff0000">w</text>
<text x="0" y="0" transform="translate(152.6,45.4) rotate(361.2)" text-anchor="middle" font-family="Liberation Mono" font-weight="bold" font-size="26" fill="#ff0000">a</text>
<text x="0" y="0" transform="translate(177.1,48.8) rotate(374.6)" text-anchor="middle" font-family="Liberation Mono" font-weight="bold" font-size="26" fill="#ff0000">i</text>
<text x="0" y="0" transform="translate(200.2,57.8) rotate(388.0)" text-anchor="middle" font-family="Liberation Mono" font-weight="bold" font-size="26" fill="#ff0000">y</text>
<text x="0" y="0" transform="translate(220.5,71.9) rotate(401.4)" text-anchor="middle" font-family="Liberation Mono" font-weight="bold" font-size="26" fill="#ff0000">m</text>
<text x="0" y="0" transform="translate(237.0,90.3) rotate(414.8)" text-anchor="middle" font-family="Liberation Mono" font-weight="bold" font-size="26" fill="#ff0000">.</text>
<text x="0" y="0" transform="translate(248.8,112.0) rotate(428.2)" text-anchor="middle" font-family="Liberation Mono" font-weight="bold" font-size="26" fill="#ff0000">c</text>
<text x="0" y="0" transform="translate(255.3,135.9) rotate(441.6)" text-anchor="middle" font-family="Liberation Mono" font-weight="bold" font-size="26" fill="#ff0000">o</text>
<text x="0" y="0" transform="translate(256.0,160.6) rotate(455.0)" text-anchor="middle" font-family="Liberation Mono" font-weight="bold" font-size="26" fill="#ff0000">m</text>
<text x="0" y="0" transform="translate(70.5,255.2) rotate(37.6)" text-anchor="middle" font-family="Liberation Mono" font-size="14" fill="#ff0000">h</text>
<text x="0" y="0" transform="translate(83.0,263.7) rotate(31.0)" text-anchor="middle" font-family="Liberation Mono" font-size="14" fill="#ff0000">a</text>
<text x="0" y="0" transform="translate(96.4,270.8) rotate(24.3)" text-anchor="middle" font-family="Liberation Mono" font-size="14" fill="#ff0000">i</text>
<text x="0" y="0" transform="translate(110.6,276.2) rotate(17.7)" text-anchor="middle" font-family="Liberation Mono" font-size="14" fill="#ff0000">w</text>
<text x="0" y="0" transform="translate(125.3,280.0) rotate(11.1)" text-anchor="middle" font-family="Liberation Mono" font-size="14" fill="#ff0000">a</text>
<text x="0" y="0" transform="translate(140.3,282.0) rotate(4.4)" text-anchor="middle" font-family="Liberation Mono" font-size="14" fill="#ff0000">i</text>
<text x="0" y="0" transform="translate(155.5,282.3) rotate(-2.2)" text-anchor="middle" font-family="Liberation Mono" font-size="14" fill="#ff0000">y</text>
<text x="0" y="0" transform="translate(170.6,280.8) rotate(-8.9)" text-anchor="middle" font-family="Liberation Mono" font-size="14" fill="#ff0000">m</text>
<text x="0" y="0" transform="translate(185.4,277.6) rotate(-15.5)" text-anchor="middle" font-family="Liberation Mono" font-size="14" fill="#ff0000">.</text>
<text x="0" y="0" transform="translate(199.7,272.8) rotate(-22.1)" text-anchor="middle" font-family="Liberation Mono" font-size="14" fill="#ff0000">c</text>
<text x="0" y="0" transform="translate(213.4,266.2) rotate(-28.8)" text-anchor="middle" font-family="Liberation Mono" font-size="14" fill="#ff0000">o</text>
<text x="0" y="0" transform="translate(226.3,258.2) rotate(-35.4)" text-anchor="middle" font-family="Liberation Mono" font-size="14" fill="#ff0000">m</text>
<text x="152.4000000000001" y="164.39999999999998" text-anchor="middle" font-family="Liberation Serif, serif" font-weight="400" font-size="37" letter-spacing="4" fill="#ff0000">海外源码</text>
<text x="0" y="0" transform="translate(60.4,231.39999999999998) scale(1.0,1)" text-anchor="middle" font-family="Liberation Sans" font-weight="bold" font-size="25" fill="#ff0000">h</text>
<text x="0" y="0" transform="translate(77.1,231.39999999999998) scale(1.0,1)" text-anchor="middle" font-family="Liberation Sans" font-weight="bold" font-size="25" fill="#ff0000">a</text>
<text x="0" y="0" transform="translate(93.9,231.39999999999998) scale(1.0,1)" text-anchor="middle" font-family="Liberation Sans" font-weight="bold" font-size="25" fill="#ff0000">i</text>
<text x="0" y="0" transform="translate(110.6,231.39999999999998) scale(0.72,1)" text-anchor="middle" font-family="Liberation Sans" font-weight="bold" font-size="25" fill="#ff0000">w</text>
<text x="0" y="0" transform="translate(127.4,231.39999999999998) scale(1.0,1)" text-anchor="middle" font-family="Liberation Sans" font-weight="bold" font-size="25" fill="#ff0000">a</text>
<text x="0" y="0" transform="translate(144.1,231.39999999999998) scale(1.0,1)" text-anchor="middle" font-family="Liberation Sans" font-weight="bold" font-size="25" fill="#ff0000">i</text>
<text x="0" y="0" transform="translate(160.9,231.39999999999998) scale(1.0,1)" text-anchor="middle" font-family="Liberation Sans" font-weight="bold" font-size="25" fill="#ff0000">y</text>
<text x="0" y="0" transform="translate(177.6,231.39999999999998) scale(0.72,1)" text-anchor="middle" font-family="Liberation Sans" font-weight="bold" font-size="25" fill="#ff0000">m</text>
<text x="0" y="0" transform="translate(194.4,231.39999999999998) scale(1.0,1)" text-anchor="middle" font-family="Liberation Sans" font-weight="bold" font-size="25" fill="#ff0000">.</text>
<text x="0" y="0" transform="translate(211.1,231.39999999999998) scale(1.0,1)" text-anchor="middle" font-family="Liberation Sans" font-weight="bold" font-size="25" fill="#ff0000">c</text>
<text x="0" y="0" transform="translate(227.9,231.39999999999998) scale(1.0,1)" text-anchor="middle" font-family="Liberation Sans" font-weight="bold" font-size="25" fill="#ff0000">o</text>
<text x="0" y="0" transform="translate(244.6,231.39999999999998) scale(0.72,1)" text-anchor="middle" font-family="Liberation Sans" font-weight="bold" font-size="25" fill="#ff0000">m</text>
</svg>
<div id="sb"></div><div id="sbt"></div>
</body></html>
